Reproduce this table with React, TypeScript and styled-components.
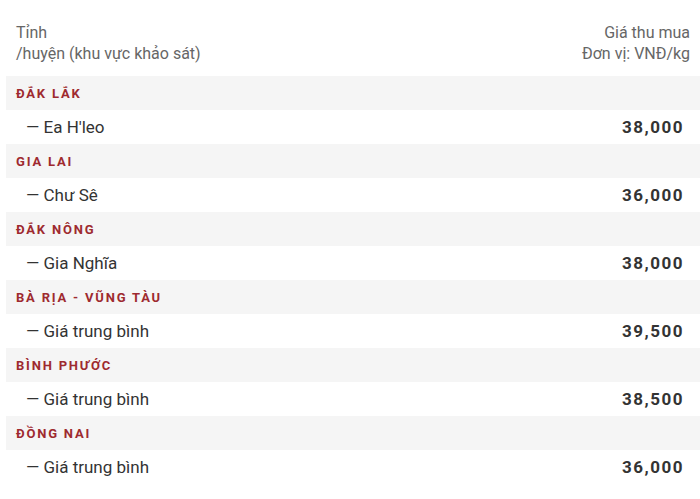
import React from 'react';
import styled, { createGlobalStyle } from 'styled-components';

const GlobalStyle = createGlobalStyle`
  * { box-sizing: border-box; }
  body {
    margin: 0;
    background: #fff;
    font-family: Roboto, "Noto Sans", Arial, sans-serif;
  }
`;

type Region = { name: string; items: { label: string; price: string }[] };

const regions: Region[] = [
  { name: 'Đắk Lắk', items: [{ label: "Ea H'leo", price: '38,000' }] },
  { name: 'Gia Lai', items: [{ label: 'Chư Sê', price: '36,000' }] },
  { name: 'Đắk Nông', items: [{ label: 'Gia Nghĩa', price: '38,000' }] },
  { name: 'Bà Rịa - Vũng Tàu', items: [{ label: 'Giá trung bình', price: '39,500' }] },
  { name: 'Bình Phước', items: [{ label: 'Giá trung bình', price: '38,500' }] },
  { name: 'Đồng Nai', items: [{ label: 'Giá trung bình', price: '36,000' }] },
];

function App() {
  return (
    <>
      <GlobalStyle />
      <Table>
        <Head>
          <HeadCell>
            Tỉnh
            <br />
            /huyện (khu vực khảo sát)
          </HeadCell>
          <HeadCell $right>
            Giá thu mua
            <br />
            Đơn vị: VNĐ/kg
          </HeadCell>
        </Head>
        {regions.map((r) => (
          <React.Fragment key={r.name}>
            <SectionRow>
              <SectionTitle>{r.name}</SectionTitle>
            </SectionRow>
            {r.items.map((it) => (
              <ItemRow key={it.label}>
                <ItemLabel>— {it.label}</ItemLabel>
                <Price>{it.price}</Price>
              </ItemRow>
            ))}
          </React.Fragment>
        ))}
      </Table>
    </>
  );
}

const Table = styled.div`
  width: 700px;
  padding-left: 6px;
`;
const Head = styled.div`
  display: flex;
  justify-content: space-between;
  padding: 22px 10px 12px 10px;
`;
const HeadCell = styled.div<{ $right?: boolean }>`
  font-size: 16px;
  line-height: 21px;
  color: #666;
  text-align: ${(p) => (p.$right ? 'right' : 'left')};
`;
const SectionRow = styled.div`
  display: flex;
  align-items: center;
  height: 34px;
  padding: 0 10px;
  background: #f5f5f5;
`;
const SectionTitle = styled.span`
  font-size: 13px;
  font-weight: 700;
  letter-spacing: 1.8px;
  text-transform: uppercase;
  color: #9e2a2f;
`;
const ItemRow = styled.div`
  display: flex;
  align-items: center;
  justify-content: space-between;
  height: 34px;
  padding: 0 16px 0 20px;
`;
const ItemLabel = styled.span`
  font-size: 17px;
  color: #333;
`;
const Price = styled.span`
  font-size: 17px;
  font-weight: 700;
  letter-spacing: 1.5px;
  color: #333;
`;

export default App;
